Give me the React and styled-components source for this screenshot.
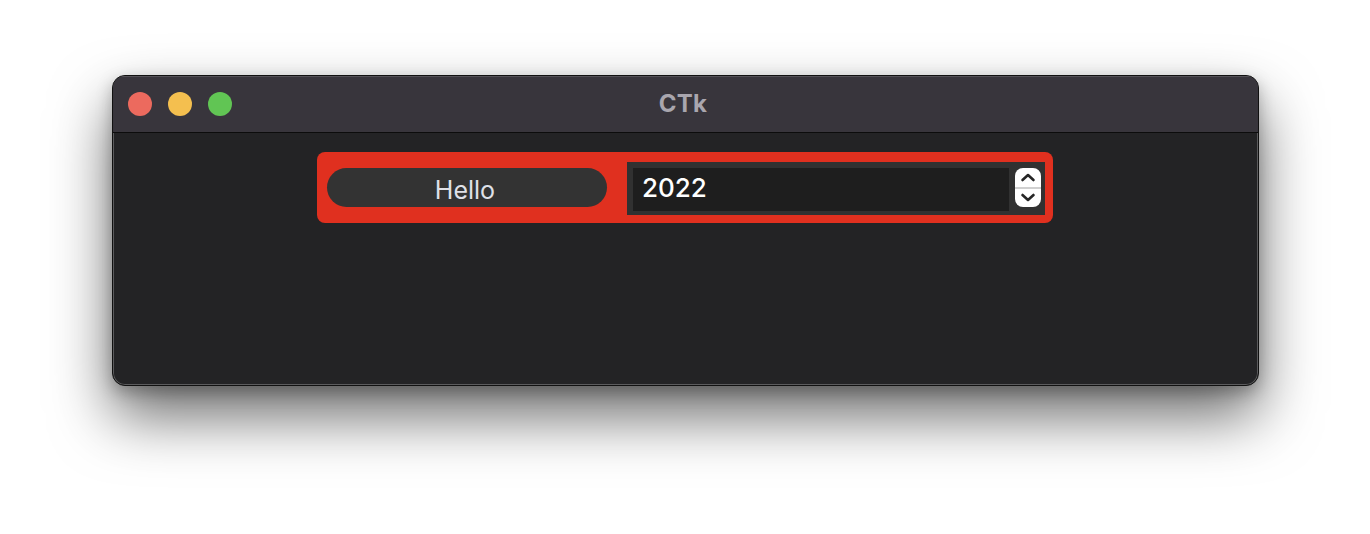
import React from "react";
import styled, { createGlobalStyle } from "styled-components";

const GlobalStyle = createGlobalStyle`
  html, body {
    margin: 0;
    padding: 0;
    background: #ffffff;
  }
  body {
    font-family: Inter, "Liberation Sans", sans-serif;
    -webkit-font-smoothing: antialiased;
  }
`;

const lights = ["#ec6a5e", "#f4bf4f", "#61c554"];

const Stepper = () => (
  <StepperBox>
    <StepHalf>
      <svg width="16" height="11" viewBox="0 0 16 11">
        <path d="M2.5 8 L8 3 L13.5 8" fill="none" stroke="#262626" strokeWidth="2.6" strokeLinecap="round" strokeLinejoin="round" />
      </svg>
    </StepHalf>
    <StepDivider />
    <StepHalf>
      <svg width="16" height="11" viewBox="0 0 16 11">
        <path d="M2.5 3 L8 8 L13.5 3" fill="none" stroke="#262626" strokeWidth="2.6" strokeLinecap="round" strokeLinejoin="round" />
      </svg>
    </StepHalf>
  </StepperBox>
);

const App = () => {
  return (
    <>
      <GlobalStyle />
      <Page>
        <Window>
          <TitleBar>
            <Lights>
              {lights.map((c) => (
                <Light key={c} color={c} />
              ))}
            </Lights>
            <Title>CTk</Title>
          </TitleBar>
          <Body>
            <Frame>
              <HelloButton>Hello</HelloButton>
              <SpinBox>
                <Field>2022</Field>
                <Stepper />
              </SpinBox>
            </Frame>
          </Body>
        </Window>
      </Page>
    </>
  );
};

export default App;

const Page = styled.div`
  width: 1370px;
  height: 534px;
  display: flex;
  justify-content: center;
  padding-top: 75px;
  box-sizing: border-box;
  overflow: hidden;
`;

const Window = styled.div`
  width: 1147px;
  height: 311px;
  box-sizing: border-box;
  border: 1px solid #111111;
  border-radius: 13px;
  overflow: hidden;
  display: flex;
  flex-direction: column;
  background: #232325;
  box-shadow: inset 0 0 0 1px rgba(255, 255, 255, 0.26),
    0 30px 60px rgba(0, 0, 0, 0.58), 0 6px 16px rgba(0, 0, 0, 0.25);
`;

const TitleBar = styled.div`
  position: relative;
  height: 56px;
  flex-shrink: 0;
  display: flex;
  align-items: center;
  justify-content: center;
  background: #38353c;
  border-bottom: 1px solid #0c0c0c;
  box-shadow: inset 0 1px 0 rgba(255, 255, 255, 0.14);
`;

const Lights = styled.div`
  position: absolute;
  left: 15px;
  top: 16px;
  display: flex;
  gap: 16px;
`;

const Light = styled.span`
  width: 24px;
  height: 24px;
  border-radius: 50%;
  background: ${(p) => p.color};
`;

const Title = styled.div`
  font-family: Inter, "Liberation Sans", sans-serif;
  font-weight: 700;
  font-size: 24px;
  color: #a9a6ae;
  letter-spacing: 0.2px;
  margin-left: -4px;
  margin-top: -2px;
`;

const Body = styled.div`
  flex: 1;
  display: flex;
  justify-content: center;
  align-items: flex-start;
  padding-top: 19px;
`;

const Frame = styled.div`
  width: 736px;
  height: 71px;
  box-sizing: border-box;
  background: #e0301f;
  border-radius: 8px;
  display: flex;
  align-items: flex-start;
  padding: 10px 8px 0 10px;
  gap: 20px;
`;

const HelloButton = styled.div`
  width: 280px;
  height: 39px;
  margin-top: 6px;
  border-radius: 20px;
  background: #333333;
  color: #dfe1e8;
  font-size: 25px;
  display: flex;
  align-items: center;
  justify-content: center;
  padding: 5px 4px 0 0;
  box-sizing: border-box;
`;

const SpinBox = styled.div`
  flex: 1;
  height: 53px;
  box-sizing: border-box;
  background: #313131;
  display: flex;
  align-items: flex-start;
  padding: 6px 4px 4px 6px;
  gap: 6px;
`;

const Field = styled.div`
  flex: 1;
  height: 43px;
  background: #1e1e1e;
  color: #ffffff;
  font-size: 26px;
  font-weight: 500;
  display: flex;
  align-items: center;
  padding: 0 0 4px 9px;
  box-sizing: border-box;
`;

const StepperBox = styled.div`
  width: 26px;
  height: 39px;
  border-radius: 8px;
  background: #ffffff;
  display: flex;
  flex-direction: column;
  overflow: hidden;
`;

const StepHalf = styled.div`
  flex: 1;
  display: flex;
  align-items: center;
  justify-content: center;
`;

const StepDivider = styled.div`
  height: 2px;
  background: #d0d0d0;
`;
